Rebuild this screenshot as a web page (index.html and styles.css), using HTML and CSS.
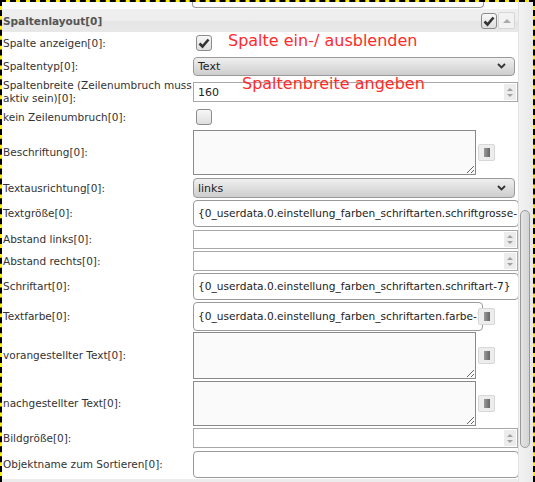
FILE: index.html
```html
<!DOCTYPE html>
<html>
  <head>
    <title>Spaltenlayout</title>
    <link rel="stylesheet" href="styles.css">
  </head>
  <body>
    <div class="frame">
      <div class="panel">
        <div class="stub"><div class="stub-box"></div></div>

        <div class="section-head">
          <span class="head-title">Spaltenlayout[0]</span>
          <span class="check">
            <svg width="14" height="14" viewBox="0 0 14 14"><path d="M2.5 7.5 L5.5 10.5 L11.5 3.5" fill="none" stroke="#333" stroke-width="2.6"/></svg>
          </span>
          <span class="collapse">
            <svg width="8" height="5" viewBox="0 0 8 5"><path d="M0 5 L4 1 L8 5 Z" fill="#aaa"/></svg>
          </span>
        </div>

        <div class="row r22">
          <label class="lbl">Spalte anzeigen[0]:</label>
          <span class="check box-gap">
            <svg width="14" height="14" viewBox="0 0 14 14"><path d="M2.5 7.5 L5.5 10.5 L11.5 3.5" fill="none" stroke="#333" stroke-width="2.6"/></svg>
          </span>
          <span class="note note-show">Spalte ein-/ ausblenden</span>
        </div>

        <div class="row r24">
          <label class="lbl">Spaltentyp[0]:</label>
          <div class="select">
            <span class="select-text">Text</span>
            <svg width="9" height="6" viewBox="0 0 9 6"><path d="M1 1 L4.5 4.5 L8 1" fill="none" stroke="#333" stroke-width="1.8"/></svg>
          </div>
        </div>

        <div class="row r28">
          <label class="lbl">Spaltenbreite (Zeilenumbruch muss aktiv sein)[0]:</label>
          <div class="num">
            <span class="num-value">160</span>
            <span class="spin"><i class="up"></i><i class="down"></i></span>
          </div>
          <span class="note note-width">Spaltenbreite angeben</span>
        </div>

        <div class="row r22">
          <label class="lbl">kein Zeilenumbruch[0]:</label>
          <span class="check box-gap"></span>
        </div>

        <div class="row r49">
          <label class="lbl">Beschriftung[0]:</label>
          <textarea class="area h45"></textarea>
          <span class="pick"><i></i></span>
        </div>

        <div class="row r22">
          <label class="lbl">Textausrichtung[0]:</label>
          <div class="select h20">
            <span class="select-text">links</span>
            <svg width="9" height="6" viewBox="0 0 9 6"><path d="M1 1 L4.5 4.5 L8 1" fill="none" stroke="#333" stroke-width="1.8"/></svg>
          </div>
        </div>

        <div class="row r29">
          <label class="lbl">Textgröße[0]:</label>
          <div class="text">{0_userdata.0.einstellung_farben_schriftarten.schriftgrosse-1}</div>
        </div>

        <div class="row r22">
          <label class="lbl">Abstand links[0]:</label>
          <div class="num h19">
            <span class="num-value"></span>
            <span class="spin"><i class="up"></i><i class="down"></i></span>
          </div>
        </div>

        <div class="row r22">
          <label class="lbl">Abstand rechts[0]:</label>
          <div class="num">
            <span class="num-value"></span>
            <span class="spin"><i class="up"></i><i class="down"></i></span>
          </div>
        </div>

        <div class="row r29">
          <label class="lbl">Schriftart[0]:</label>
          <div class="text">{0_userdata.0.einstellung_farben_schriftarten.schriftart-7}</div>
        </div>

        <div class="row r30">
          <label class="lbl">Textfarbe[0]:</label>
          <div class="text short">{0_userdata.0.einstellung_farben_schriftarten.farbe-1}</div>
          <span class="pick overlap"><i></i></span>
        </div>

        <div class="row r49">
          <label class="lbl">vorangestellter Text[0]:</label>
          <textarea class="area h47"></textarea>
          <span class="pick"><i></i></span>
        </div>

        <div class="row r47">
          <label class="lbl">nachgestellter Text[0]:</label>
          <textarea class="area h45"></textarea>
          <span class="pick"><i></i></span>
        </div>

        <div class="row r22">
          <label class="lbl">Bildgröße[0]:</label>
          <div class="num">
            <span class="num-value"></span>
            <span class="spin"><i class="up"></i><i class="down"></i></span>
          </div>
        </div>

        <div class="row r30">
          <label class="lbl">Objektname zum Sortieren[0]:</label>
          <div class="text"></div>
        </div>

        <div class="section-foot"></div>
      </div>

      <div class="scroll">
        <div class="thumb"></div>
      </div>
    </div>
  </body>
</html>
```

FILE: styles.css
```css
body {
  margin: 0;
  font-family: "DejaVu Sans", Verdana, sans-serif;
  font-size: 10.5px;
  color: #333;
}
.frame {
  width: 535px;
  height: 482px;
  box-sizing: border-box;
  border: 2px dashed #000;
  border-bottom: none;
  background-color: #ffea00;
  display: flex;
  overflow: hidden;
}
.panel {
  width: 516px;
  flex: none;
  background-color: #fff;
  overflow: hidden;
}
.scroll {
  width: 15px;
  flex: none;
  background: linear-gradient(to right, #f3f3f3, #e9e9e9);
  border-left: 1px solid #e2e2e2;
  box-sizing: border-box;
  padding-top: 208px;
  padding-left: 1px;
}
.thumb {
  width: 10px;
  height: 238px;
  box-sizing: border-box;
  border: 1px solid #999;
  border-radius: 6px;
  background: linear-gradient(to right, #e4e4e4, #d4d4d4);
}

/* top stub of previous field */
.stub {
  height: 6px;
}
.stub-box {
  margin-left: 190px;
  width: 290px;
  height: 5px;
  border: 1px solid #999;
  border-top: none;
  border-radius: 0 0 4px 4px;
}

.section-head {
  margin-top: 1px;
  height: 23px;
  display: flex;
  align-items: center;
  padding-left: 1px;
  background: linear-gradient(#f0f0f0 0%, #ededed 50%, #e5e5e5 55%, #e8e8e8 100%);
}
.head-title {
  flex: 1;
  font-weight: bold;
  color: #555;
}
.collapse {
  width: 17px;
  height: 17px;
  box-sizing: border-box;
  margin-left: 1px;
  margin-right: 3px;
  border: 1px solid #d6d6d6;
  border-radius: 2px;
  background-color: #f2f2f2;
  display: flex;
  align-items: center;
  justify-content: center;
}
.section-foot {
  height: 10px;
  background-color: #ececec;
}

.row {
  display: flex;
  align-items: center;
  position: relative;
}
.r22 { height: 22px; }
.r24 { height: 24px; }
.r28 { height: 28px; }
.r29 { height: 29px; }
.r30 { height: 30px; }
.r47 { height: 47px; }
.r49 { height: 49px; }

.lbl {
  width: 190px;
  flex: none;
  padding-left: 1px;
  line-height: 13px;
}

.check {
  width: 16px;
  height: 16px;
  box-sizing: border-box;
  border: 1px solid #8c8c8c;
  border-radius: 3px;
  background: linear-gradient(#f7f7f7, #dedede);
  display: flex;
  align-items: center;
  justify-content: center;
}
.box-gap {
  margin-left: 3px;
}

.note {
  position: absolute;
  font-size: 16px;
  color: #ff2a2a;
}
.note-show {
  left: 226px;
  top: -1px;
}
.note-width {
  left: 240px;
  top: -4px;
}

.select {
  width: 322px;
  height: 19px;
  box-sizing: border-box;
  border: 1px solid #9a9a9a;
  border-radius: 4px;
  background: linear-gradient(#f0f0f0, #cdcdcd);
  display: flex;
  align-items: center;
  padding: 0 8px 0 4px;
  font-size: 11px;
  color: #222;
}
.h20 { height: 20px; }
.select-text {
  flex: 1;
}

.num {
  width: 325px;
  height: 20px;
  flex: none;
  box-sizing: border-box;
  border: 1px solid #a8a8a8;
  display: flex;
  background-color: #fff;
}
.h19 { height: 19px; }
.num-value {
  flex: 1;
  align-self: center;
  padding-left: 4px;
  font-size: 11px;
  color: #222;
}
.spin {
  width: 12px;
  margin: 1px 1px 1px 0;
  background-color: #ececec;
  display: flex;
  flex-direction: column;
  align-items: center;
  justify-content: center;
  gap: 3px;
}
.spin i {
  width: 0;
  height: 0;
  border-left: 3px solid transparent;
  border-right: 3px solid transparent;
}
.spin .up {
  border-bottom: 3px solid #a0a0a0;
}
.spin .down {
  border-top: 3px solid #a0a0a0;
}

.text {
  width: 326px;
  height: 27px;
  flex: none;
  box-sizing: border-box;
  border: 1px solid #9a9a9a;
  border-radius: 4px;
  padding: 0 0 0 4px;
  line-height: 25px;
  font-size: 10.6px;
  color: #222;
  white-space: nowrap;
  overflow: hidden;
}
.text.short {
  width: 290px;
  height: 29px;
  line-height: 27px;
}

.area {
  width: 283px;
  flex: none;
  box-sizing: border-box;
  margin: 0;
  border: 1px solid #8a8a8a;
  background-color: #fafafa;
  padding: 2px;
  font-family: "DejaVu Sans", Verdana, sans-serif;
  font-size: 11px;
}
.h45 { height: 45px; }
.h47 { height: 47px; }

.pick {
  width: 17px;
  height: 17px;
  box-sizing: border-box;
  margin-left: 2px;
  border: 1px solid #d8d8d8;
  border-radius: 2px;
  background-color: #ededed;
  display: flex;
  align-items: center;
  justify-content: center;
}
.pick i {
  width: 6px;
  height: 9px;
  background: linear-gradient(to right, #999, #666);
}
.pick.overlap {
  margin-left: -5px;
}
```
